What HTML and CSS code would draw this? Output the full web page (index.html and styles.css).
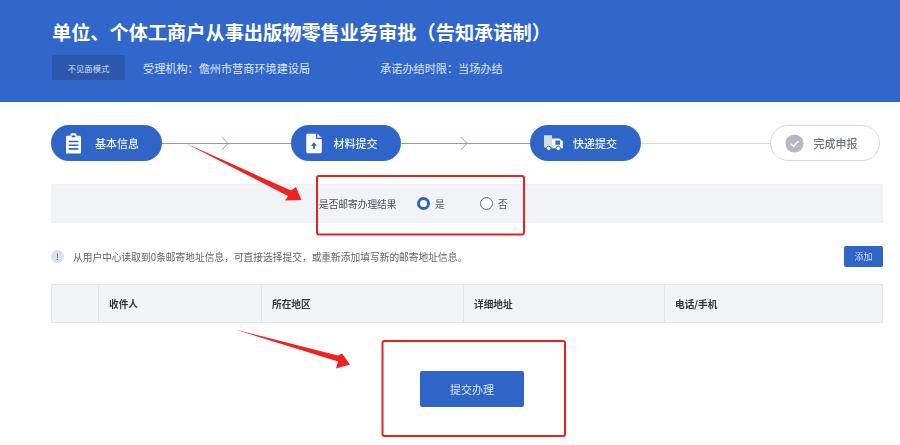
FILE: index.html
```html
<!DOCTYPE html>
<html lang="zh-CN">
<head>
<meta charset="utf-8">
<title>单位、个体工商户从事出版物零售业务审批</title>
<link rel="stylesheet" href="styles.css">
</head>
<body>
<div class="page">
  <header class="header">
    <h1 class="title">单位、个体工商户从事出版物零售业务审批（告知承诺制）</h1>
    <div class="meta">
      <span class="tag">不见面模式</span>
      <span class="org">受理机构：儋州市营商环境建设局</span>
      <span class="limit">承诺办结时限：当场办结</span>
    </div>
  </header>

  <main class="main">
    <div class="stepper">
      <div class="step">
        <svg class="step-icon icon-clip" viewBox="0 0 20 24" preserveAspectRatio="none"><path fill="#fff" d="M1.500 3H6V2C6 1 7 .3 8 .3h4c1 0 2 .7 2 1.700v1h4.500c.8 0 1.500.7 1.500 1.500v17.500c0 .8-.7 1.500-1.500 1.500h-17C.7 23.500 0 22.800 0 22V4.500C0 3.700.7 3 1.500 3z"/><path fill="#3065c8" d="M7.500 2.800h5v2H7.500zM3.500 8.800h13v1.800h-13zM3.500 13h13v1.800h-13zM3.500 17.200h13V19h-13z"/></svg>
        <span>基本信息</span>
      </div>
      <div class="link"><svg class="chev" viewBox="0 0 8 14"><path d="M1 .7 7 7 1 13.300" fill="none" stroke="#7f93ba" stroke-width=".9"/></svg></div>
      <div class="step">
        <svg class="step-icon icon-file" viewBox="0 0 20 24" preserveAspectRatio="none"><path fill="#fff" d="M2 .8h10.500v6H19.700V21.500c0 1-.8 1.700-1.700 1.700H2c-1 0-1.700-.7-1.700-1.700V2.500C.3 1.500 1 .8 2 .8z"/><path fill="#e4eaf7" d="M14 .8 19.700 5.300H14z"/><path fill="#3065c8" d="M9.800 10.500 13.500 14.500h-2.400V18H8.600v-3.500H6.200z"/></svg>
        <span>材料提交</span>
      </div>
      <div class="link"><svg class="chev" viewBox="0 0 8 14"><path d="M1 .7 7 7 1 13.300" fill="none" stroke="#7f93ba" stroke-width=".9"/></svg></div>
      <div class="step">
        <svg class="step-icon icon-truck" viewBox="0 0 20 18" preserveAspectRatio="none"><path fill="#d5dff4" d="M0 .3h8.500V14H0z"/><path fill="#fff" d="M8.500 4H16l3.800 3v8H8.500z"/><path fill="#3065c8" d="M12 6.200h5v4.800h-5z"/><circle cx="5" cy="15" r="2.400" fill="#fff" stroke="#3065c8"/><circle cx="15" cy="15" r="2.400" fill="#fff" stroke="#3065c8"/></svg>
        <span>快递提交</span>
      </div>
      <div class="link link-idle"></div>
      <div class="step step-idle">
        <svg class="step-icon" viewBox="0 0 20 20"><circle cx="10" cy="10" r="9.500" fill="#b2b8c6"/><path d="M5.800 10.300 8.900 13l5.300-5.500" fill="none" stroke="#fff" stroke-width="1.500"/></svg>
        <span>完成申报</span>
      </div>
    </div>

    <div class="choice">
      <span class="choice-label">是否邮寄办理结果</span>
      <label class="radio"><i class="dot dot-on"></i>是</label>
      <label class="radio"><i class="dot"></i>否</label>
    </div>

    <div class="notice">
      <span class="notice-icon">!</span>
      <span class="notice-text">从用户中心读取到0条邮寄地址信息，可直接选择提交，或重新添加填写新的邮寄地址信息。</span>
      <button class="add">添加</button>
    </div>

    <div class="table">
      <div class="cell"></div>
      <div class="cell">收件人</div>
      <div class="cell">所在地区</div>
      <div class="cell">详细地址</div>
      <div class="cell">电话/手机</div>
    </div>

    <div class="actions"><button class="submit">提交办理</button></div>
  </main>

  <svg class="marks" viewBox="0 0 900 445" aria-hidden="true">
    <path fill="#ee2320" d="M185 143 291 190.500 296 187 301.500 200 285 200.500 288 196z"/>
    <path fill="#ee2320" d="M235 329.500 338 355.500 342 353.500 350 364.500 336 368.500 338 361.500z"/>
    <rect x="317" y="176" width="207" height="58.500" rx="2" fill="none" stroke="#e8231f" stroke-width="2"/>
    <rect x="382.500" y="341" width="182.500" height="95" rx="2" fill="none" stroke="#e8231f" stroke-width="2"/>
  </svg>
</div>
</body>
</html>
```

FILE: styles.css
```css
* { box-sizing: border-box; }
html, body { margin: 0; padding: 0; background: #fff; }
body { width: 900px; height: 445px; overflow: hidden; font-family: "Noto Sans CJK SC", "Noto Sans", sans-serif; }
.page { position: relative; width: 900px; height: 445px; overflow: hidden; filter: blur(0.35px); }

.header { height: 102px; background: #3166ca; padding: 18px 0 0 52px; color: #fff; }
.title { margin: 0; font-size: 19.200px; line-height: 28px; font-weight: 700; white-space: nowrap; }
.meta { display: flex; align-items: center; margin-top: 9px; font-size: 11.150px; color: #dfe7f7; }
.tag { width: 73px; height: 25px; background: #2b58ad; display: flex; align-items: center; justify-content: center; font-size: 8.300px; color: #d5def2; }
.org { margin-left: 18px; }
.limit { margin-left: 70px; }

.main { padding: 23px 17px 0 51px; }
.stepper { display: flex; align-items: center; width: 829px; }
.step { width: 110.500px; height: 36px; flex: none; border-radius: 18px; background: #3065c8; color: #eef3fc; display: flex; align-items: center; padding-left: 14px; font-size: 11px; font-weight: 500; }
.step span { margin-left: 10px; }
.step-icon { width: 20px; height: 21px; flex: none; }
.icon-clip { width: 15px; margin-left: 1px; margin-right: 4px; }
.icon-file { width: 16px; margin-left: 1px; margin-right: 2px; }
.icon-truck { width: 19px; height: 16px; }
.step-idle { background: #fff; border: 1px solid #d6d9df; color: #6d7480; padding-left: 14px; }
.step-idle .step-icon { width: 19px; height: 19px; }
.link { flex: 1; height: 1px; background: #7f9ade; position: relative; }
.link-idle { background: #d6d9df; }
.chev { position: absolute; left: 59px; top: -7px; width: 8px; height: 15px; }

.choice { height: 39px; margin-top: 23px; width: 832px; background: #f2f3f7; border: 1px solid #eff0f4; display: flex; align-items: center; padding-left: 267px; font-size: 9.700px; color: #4a4f58; }
.choice-label { width: 98px; }
.radio { display: flex; align-items: center; width: 63px; color: #555a63; }
.dot { width: 13px; height: 13px; border-radius: 50%; border: 1px solid #666b73; margin-right: 5px; background: #fff; flex: none; }
.dot-on { border: 3.500px solid #2f62c3; }

.notice { display: flex; align-items: center; width: 832px; height: 21px; margin-top: 23px; font-size: 9.730px; color: #5e636c; }
.notice-icon { width: 13px; height: 13px; border-radius: 50%; background: #d8e1f2; color: #3a66c0; font-size: 9px; line-height: 13px; text-align: center; flex: none; }
.notice-text { margin-left: 9px; white-space: nowrap; }
.add { margin-left: auto; width: 39px; height: 21px; border: 0; border-radius: 2px; background: #3065c8; color: #c9d7f2; font: inherit; font-size: 9px; padding: 0; }

.table { display: grid; grid-template-columns: 46px 164px 202px 201px 219px; width: 832px; height: 39px; margin-top: 17px; background: #f3f4f8; border: 1px solid #e4e6ec; }
.cell { display: flex; align-items: center; padding-left: 10px; border-left: 1px solid #e4e6ec; font-size: 9.700px; font-weight: 700; color: #30343b; margin-left: -1px; }
.cell:first-child { border-left: 0; margin-left: 0; }
.cell:nth-child(2) { margin-left: 0; }

.actions { display: flex; margin-top: 48px; padding-left: 369px; }
.submit { width: 104px; height: 36px; border: 0; border-radius: 2px; background: #3065c8; color: #dfe8f8; font: inherit; font-size: 11px; padding: 0; }

.marks { position: absolute; left: 0; top: 0; width: 900px; height: 445px; pointer-events: none; }
```
